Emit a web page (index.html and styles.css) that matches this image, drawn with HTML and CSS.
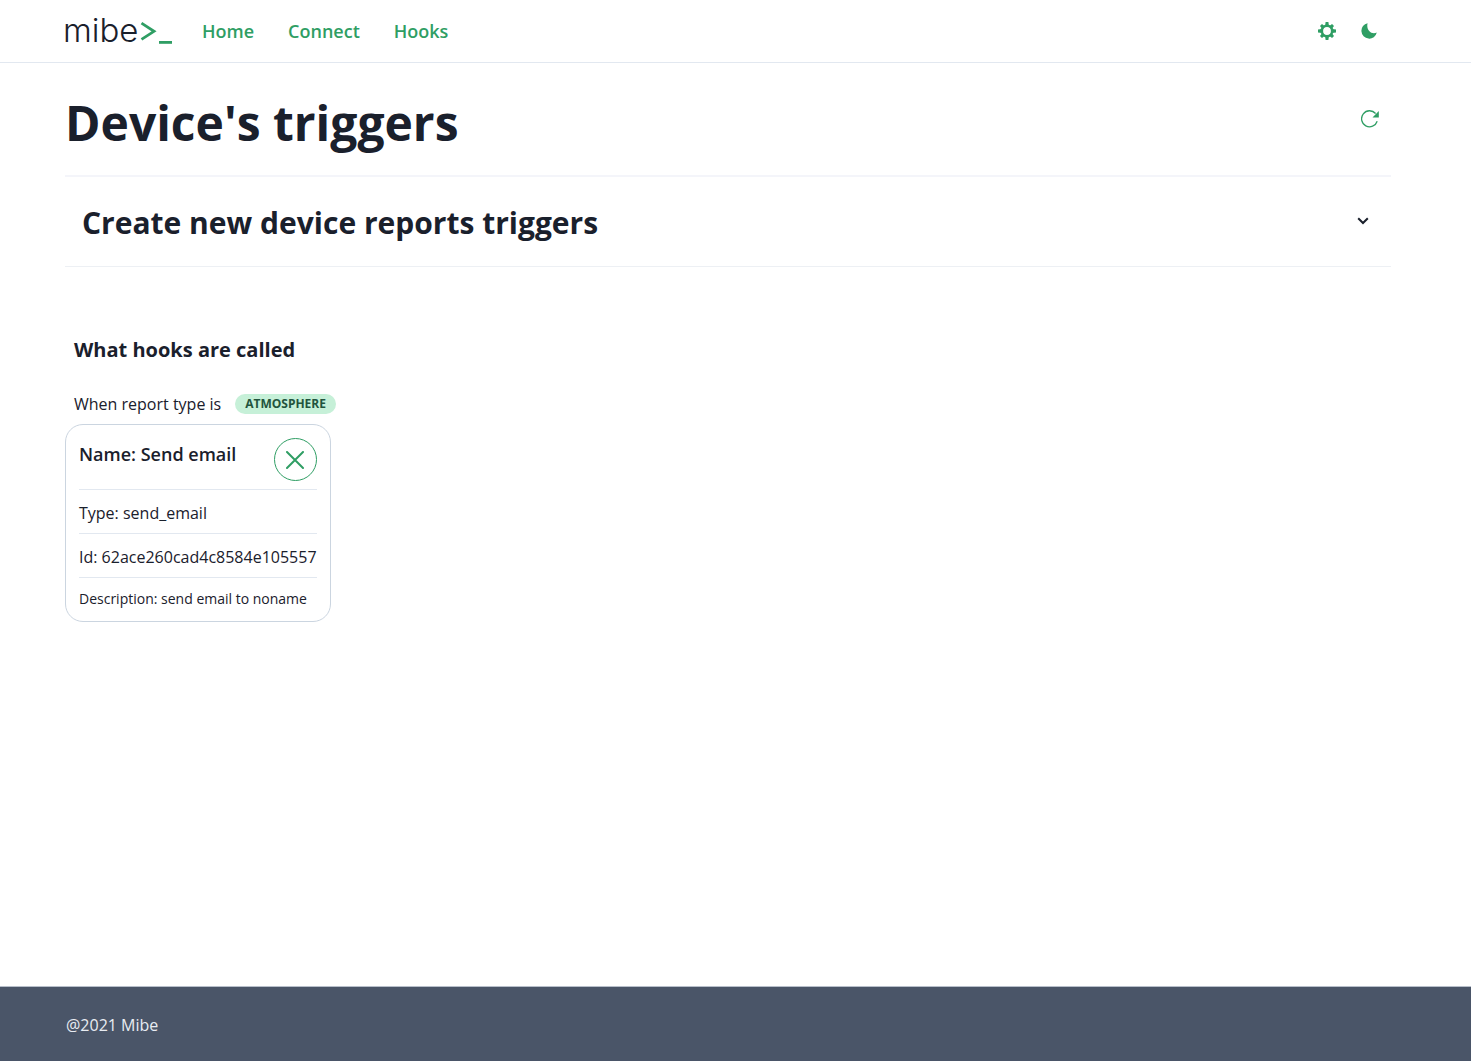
FILE: index.html
```html
<!DOCTYPE html>
<html lang="en">
<head>
  <meta charset="utf-8">
  <meta name="viewport" content="width=device-width, initial-scale=1">
  <title>Mibe</title>
  <link rel="stylesheet" href="styles.css">
</head>
<body>
  <header class="header">
    <a class="logo" href="#">mibe<svg class="logo-prompt" viewBox="0 0 32 30" aria-hidden="true"><path d="M1.500 6.200 14 14.300 1.500 22.400" fill="none" stroke="currentColor" stroke-width="2.800"/><path d="M19 24h13v2.800H19z" fill="currentColor"/></svg></a>
    <nav class="nav">
      <a href="#">Home</a>
      <a href="#">Connect</a>
      <a href="#">Hooks</a>
    </nav>
    <div class="tools">
      <button class="icon-button" type="button" aria-label="Settings">
        <svg viewBox="0 0 18 18" width="18" height="18"><g fill="currentColor"><path d="M7.600 0h2.800l.5 4H7.100zM7.600 18h2.800l.5-4H7.100zM0 7.600v2.800l4 .5V7.100zM18 7.600v2.800l-4 .5V7.100z"/><path transform="rotate(45 9 9)" d="M7.600 0.500h2.800l.5 4H7.100zM7.600 17.500h2.800l.5-4H7.100zM.5 7.600v2.800l4 .5V7.100zM17.500 7.600v2.800l-4 .5V7.100z"/></g><circle cx="9" cy="9" r="5.200" fill="none" stroke="currentColor" stroke-width="2.600"/></svg>
      </button>
      <button class="icon-button" type="button" aria-label="Dark mode">
        <svg viewBox="0 0 16 16" width="16" height="16"><path fill="currentColor" d="M6.600.2A7.800 7.800 0 1 0 15.800 9.600C10.500 12 4.800 7.200 6.600.2z"/></svg>
      </button>
    </div>
  </header>

  <main class="main">
    <div class="title-row">
      <h1>Device's triggers</h1>
      <button class="icon-button" type="button" aria-label="Refresh">
        <svg viewBox="0 0 18 18" width="18" height="18"><path d="M16.200 11.200A8 8 0 1 1 14.600 3.500" fill="none" stroke="currentColor" stroke-width="1.300"/><path d="M17.800 1v6.400h-6.300z" fill="currentColor"/></svg>
      </button>
    </div>

    <h2 class="accordion">
      <button class="accordion-button" type="button" aria-expanded="false">
        <span>Create new device reports triggers</span>
        <svg viewBox="0 0 12 8" width="12" height="8" aria-hidden="true"><path d="M1.200 1.200 6 6l4.800-4.800" fill="none" stroke="currentColor" stroke-width="2"/></svg>
      </button>
    </h2>

    <section class="hooks">
      <h3>What hooks are called</h3>
      <p class="condition">When report type is <span class="badge">Atmosphere</span></p>
      <article class="card">
        <div class="card-head">
          <h4>Name: Send email</h4>
          <button class="remove" type="button" aria-label="Remove hook">
            <svg viewBox="0 0 18 18" width="18" height="18"><path d="M1 1l16 16M17 1 1 17" fill="none" stroke="currentColor" stroke-width="2" stroke-linecap="round"/></svg>
          </button>
        </div>
        <p class="card-row">Type: send_email</p>
        <p class="card-row">Id: 62ace260cad4c8584e105557</p>
        <p class="card-row card-note">Description: send email to noname</p>
      </article>
    </section>
  </main>

  <footer class="footer">@2021 Mibe</footer>
</body>
</html>
```
FILE: styles.css
```css
* {
  box-sizing: border-box;
}

body {
  display: flex;
  flex-direction: column;
  min-height: 100vh;
  margin: 0;
  background: #fff;
  color: #1a202c;
  font-family: "Open Sans", "Noto Sans", sans-serif;
  font-size: 16px;
  line-height: 24px;
}

h1, h2, h3, h4, p {
  margin: 0;
}

button {
  padding: 0;
  border: 0;
  background: none;
  color: inherit;
  font: inherit;
  cursor: pointer;
}

svg {
  display: block;
}

.header {
  display: flex;
  align-items: center;
  height: 63px;
  padding: 0 81px 0 63px;
  border-bottom: 1px solid #e2e8f0;
}

.logo {
  display: flex;
  align-items: center;
  width: 109px;
  margin-right: 30px;
  padding-bottom: 3px;
  color: #1a202c;
  font-family: Inter, sans-serif;
  font-size: 33px;
  font-weight: 350;
  line-height: 40px;
  text-decoration: none;
}

.logo-prompt {
  flex: none;
  width: 32px;
  height: 30px;
  margin-top: 5px;
  margin-left: auto;
  color: #2f9e64;
}

.nav {
  display: flex;
  gap: 34px;
}

.nav a {
  color: #2f9e64;
  font-size: 18px;
  font-weight: 600;
  text-decoration: none;
}

.tools {
  display: flex;
  margin-left: auto;
}

.icon-button {
  display: grid;
  place-items: center;
  width: 42px;
  height: 42px;
  color: #2f9e64;
}

.main {
  flex: 1;
  padding: 0 80px 0 65px;
}

.title-row {
  display: flex;
  align-items: center;
  justify-content: space-between;
  height: 112px;
}

h1 {
  padding-top: 8px;
  font-size: 48px;
  font-weight: 700;
  line-height: 60px;
}

.accordion {
  border-top: 2px solid #f4f5fa;
  border-bottom: 1px solid #edf0f4;
}

.accordion-button {
  display: flex;
  align-items: center;
  justify-content: space-between;
  width: 100%;
  padding: 22px 22px 23px 17px;
  font-size: 30px;
  font-weight: 700;
  line-height: 40px;
}

.accordion-button span {
  padding-top: 4px;
}

.hooks {
  padding-top: 69px;
}

h3 {
  padding-left: 9px;
  font-size: 20px;
  font-weight: 700;
  line-height: 28px;
}

.condition {
  display: flex;
  align-items: center;
  gap: 14px;
  padding: 28px 0 8px 9px;
}

.badge {
  padding: 0 10px;
  border-radius: 10px;
  background: #c6f0d8;
  color: #22543d;
  font-size: 12px;
  font-weight: 700;
  line-height: 20px;
  text-transform: uppercase;
}

.card {
  width: fit-content;
  padding: 13px 13px 12px;
  border: 1px solid #cbd5e0;
  border-radius: 18px;
}

.card-head {
  display: flex;
  justify-content: space-between;
  padding-bottom: 8px;
}

h4 {
  padding-top: 2px;
  font-size: 18px;
  font-weight: 600;
  line-height: 28px;
}

.remove {
  display: grid;
  place-items: center;
  width: 43px;
  height: 43px;
  border: 1px solid #2f9e64;
  border-radius: 50%;
  color: #2f9e64;
}

.card-row {
  padding: 11px 0 8px;
  border-top: 1px solid #e2e8f0;
}

.card-note {
  padding-bottom: 0;
  font-size: 14px;
  line-height: 20px;
}

.footer {
  padding: 26px 66px 24px;
  border-top: 1px solid #b8bfca;
  background: #4a5568;
  color: #e8ecf2;
}
```
